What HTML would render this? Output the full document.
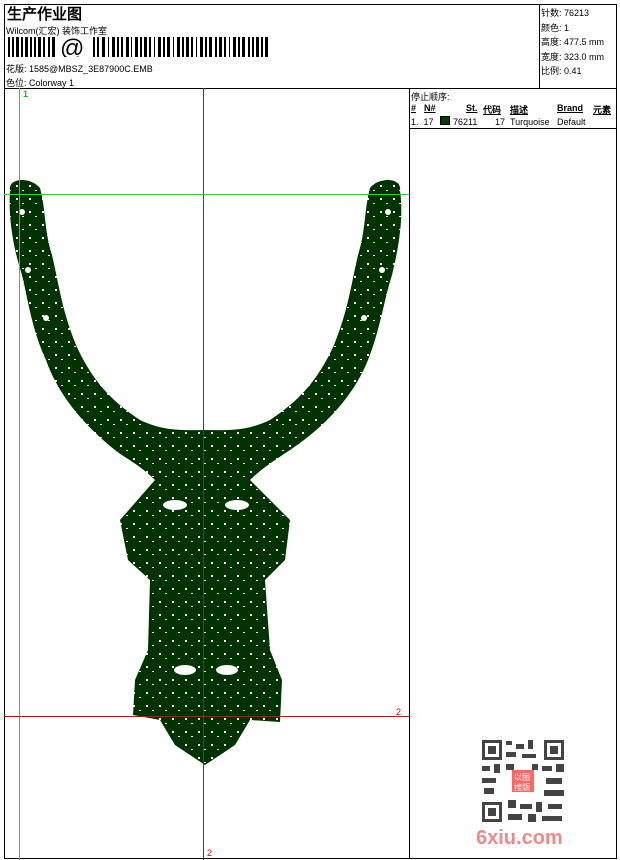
<!DOCTYPE html>
<html><head><meta charset="utf-8"><style>
*{margin:0;padding:0;box-sizing:border-box}
body{width:620px;height:860px;background:#fff;position:relative;overflow:hidden;font-family:"Liberation Sans","WenQuanYi Zen Hei",sans-serif;color:#000}
.a{position:absolute;white-space:nowrap}
.s{font-size:9px}
</style></head><body>
<div class="a" style="left:4px;top:4px;width:613px;height:855px;border:1px solid #000"></div>
<div class="a" style="left:4px;top:88px;width:613px;border-top:1px solid #000"></div>
<div class="a" style="left:539px;top:4px;height:85px;border-left:1px solid #000"></div>
<div class="a" style="left:409px;top:88px;height:771px;border-left:1px solid #000"></div>
<div class="a" style="left:409px;top:128px;width:208px;border-top:1px solid #000"></div>

<div class="a" style="left:7px;top:3px;font-size:15px;font-weight:bold;font-family:'WenQuanYi Zen Hei',sans-serif">生产作业图</div>
<div class="a s" style="left:6px;top:24px">Wilcom(汇宏) 装饰工作室</div>
<svg class="a" style="left:8px;top:37px" width="265" height="20">
<g fill="#000">
<rect x="0" y="0" width="2" height="20"/><rect x="4" y="0" width="2" height="20"/><rect x="8" y="0" width="3" height="20"/><rect x="13" y="0" width="2" height="20"/><rect x="17" y="0" width="3" height="20"/><rect x="22" y="0" width="2" height="20"/><rect x="26" y="0" width="2" height="20"/><rect x="30" y="0" width="3" height="20"/><rect x="35" y="0" width="2" height="20"/><rect x="40" y="0" width="2" height="20"/><rect x="44" y="0" width="3" height="20"/>
</g>
<text x="52" y="19" font-size="24" font-family="Liberation Sans">@</text>
<g fill="#000">
<rect x="85" y="0" width="2" height="20"/><rect x="89" y="0" width="2" height="20"/><rect x="94" y="0" width="3" height="20"/><rect x="100" y="0" width="1" height="20"/><rect x="104" y="0" width="3" height="20"/><rect x="109" y="0" width="2" height="20"/><rect x="113" y="0" width="2" height="20"/><rect x="118" y="0" width="3" height="20"/><rect x="123" y="0" width="1" height="20"/><rect x="127" y="0" width="3" height="20"/><rect x="132" y="0" width="2" height="20"/><rect x="136" y="0" width="3" height="20"/><rect x="141" y="0" width="2" height="20"/><rect x="146" y="0" width="1" height="20"/><rect x="150" y="0" width="3" height="20"/><rect x="155" y="0" width="2" height="20"/><rect x="159" y="0" width="3" height="20"/><rect x="165" y="0" width="1" height="20"/><rect x="169" y="0" width="3" height="20"/><rect x="174" y="0" width="2" height="20"/><rect x="178" y="0" width="3" height="20"/><rect x="183" y="0" width="2" height="20"/><rect x="188" y="0" width="1" height="20"/><rect x="192" y="0" width="3" height="20"/><rect x="197" y="0" width="2" height="20"/><rect x="201" y="0" width="3" height="20"/><rect x="207" y="0" width="2" height="20"/><rect x="211" y="0" width="3" height="20"/><rect x="216" y="0" width="2" height="20"/><rect x="221" y="0" width="1" height="20"/><rect x="225" y="0" width="3" height="20"/><rect x="230" y="0" width="2" height="20"/><rect x="234" y="0" width="3" height="20"/><rect x="240" y="0" width="2" height="20"/><rect x="244" y="0" width="2" height="20"/><rect x="248" y="0" width="3" height="20"/><rect x="253" y="0" width="2" height="20"/><rect x="257" y="0" width="3" height="20"/>
</g></svg>
<div class="a s" style="left:6px;top:62px">花版: 1585@MBSZ_3E87900C.EMB</div>
<div class="a s" style="left:6px;top:76px">色位: Colorway 1</div>

<div class="a s" style="left:541px;top:6px;line-height:14.5px">针数: 76213<br>颜色: 1<br>高度: 477.5 mm<br>宽度: 323.0 mm<br>比例: 0.41</div>

<div class="a s" style="left:411px;top:90px">停止顺序:</div>
<div class="a s" style="left:411px;top:103px;font-weight:bold;text-decoration:underline">#</div>
<div class="a s" style="left:424px;top:103px;font-weight:bold;text-decoration:underline">N#</div>
<div class="a s" style="left:466px;top:103px;font-weight:bold;text-decoration:underline">St.</div>
<div class="a s" style="left:483px;top:103px;font-weight:bold;text-decoration:underline">代码</div>
<div class="a s" style="left:510px;top:103px;font-weight:bold;text-decoration:underline">描述</div>
<div class="a s" style="left:557px;top:103px;font-weight:bold;text-decoration:underline">Brand</div>
<div class="a s" style="left:593px;top:103px;font-weight:bold;text-decoration:underline">元素</div>
<div class="a s" style="left:411px;top:117px">1.&nbsp; 17</div>
<div class="a" style="left:440px;top:116px;width:10px;height:9px;background:#0a3a0a;border:1px solid #000"></div>
<div class="a s" style="left:453px;top:117px">76211</div>
<div class="a s" style="left:495px;top:117px">17</div>
<div class="a s" style="left:510px;top:117px">Turquoise</div>
<div class="a s" style="left:557px;top:117px">Default</div>

<svg class="a" style="left:0;top:0" width="410" height="860">
<defs>
<pattern id="lace" width="13" height="13" patternUnits="userSpaceOnUse">
<rect width="13" height="13" fill="#003300"/>
<rect x="3" y="3" width="2" height="2" fill="#fff"/>
<rect x="9" y="8" width="2" height="1" fill="#fff"/>
</pattern>
</defs>
<g fill="url(#lace)" stroke="none">
<path d="M10,190 C8,178 30,176 40,188 C46,210 44,230 52,255 C60,290 62,310 76,345 C92,380 110,400 140,420 C165,432 185,430 205,430 C225,430 245,432 270,420 C300,400 318,380 334,345 C348,310 350,290 358,255 C366,230 364,210 370,188 C380,176 402,178 400,190 C404,220 398,250 392,275 C384,300 380,330 368,360 C352,400 320,430 290,450 C272,462 260,470 250,480 L290,520 L285,560 L265,580 L270,650 L282,680 L280,722 L250,720 L235,745 L205,765 L175,745 L160,720 L133,715 L135,680 L148,650 L150,580 L128,560 L120,520 L155,480 C140,465 128,460 115,450 C90,430 60,400 46,360 C32,330 28,300 22,275 C14,250 8,220 10,190 Z"/>
</g>
<g fill="#fff">
<ellipse cx="175" cy="505" rx="12" ry="5"/><ellipse cx="237" cy="505" rx="12" ry="5"/>
<ellipse cx="185" cy="670" rx="11" ry="5"/><ellipse cx="227" cy="670" rx="11" ry="5"/>
<circle cx="46" cy="318" r="3"/><circle cx="364" cy="318" r="3"/>
<circle cx="28" cy="270" r="3"/><circle cx="382" cy="270" r="3"/>
<circle cx="22" cy="212" r="3"/><circle cx="388" cy="212" r="3"/>
</g>
<line x1="19.5" y1="88" x2="19.5" y2="860" stroke="#00ee00" stroke-width="1"/>
<line x1="4" y1="194.5" x2="409" y2="194.5" stroke="#00ee00" stroke-width="1"/>
<line x1="203.5" y1="88" x2="203.5" y2="860" stroke="#e00000" stroke-width="1"/>
<line x1="4" y1="716.5" x2="409" y2="716.5" stroke="#e00000" stroke-width="1"/>
<text x="23" y="97" font-size="9" fill="#00cc00" font-weight="bold" font-family="Liberation Sans">1</text>
<text x="396" y="715" font-size="9" fill="#e00000" font-family="Liberation Sans">2</text>
<text x="207" y="856" font-size="9" fill="#e00000" font-family="Liberation Sans">2</text>
</svg>

<svg class="a" style="left:480px;top:738px" width="86" height="86">
<rect width="86" height="86" fill="#fff"/>
<g fill="#444">
<rect x="2" y="2" width="20" height="20"/><rect x="64" y="2" width="20" height="20"/><rect x="2" y="64" width="20" height="20"/>
</g>
<g fill="#fff"><rect x="5" y="5" width="14" height="14"/><rect x="67" y="5" width="14" height="14"/><rect x="5" y="67" width="14" height="14"/></g>
<g fill="#444"><rect x="8" y="8" width="8" height="8"/><rect x="70" y="8" width="8" height="8"/><rect x="8" y="70" width="8" height="8"/>
<rect x="26" y="3" width="6" height="4"/><rect x="36" y="6" width="8" height="5"/><rect x="48" y="2" width="5" height="9"/><rect x="26" y="14" width="10" height="5"/><rect x="42" y="16" width="14" height="4"/>
<rect x="2" y="28" width="8" height="5"/><rect x="14" y="26" width="6" height="9"/><rect x="62" y="28" width="10" height="5"/><rect x="76" y="26" width="8" height="8"/>
<rect x="2" y="40" width="14" height="5"/><rect x="66" y="40" width="16" height="6"/><rect x="4" y="50" width="10" height="6"/><rect x="64" y="52" width="20" height="6"/>
<rect x="28" y="62" width="8" height="8"/><rect x="40" y="66" width="12" height="5"/><rect x="56" y="64" width="6" height="10"/><rect x="68" y="66" width="14" height="5"/>
<rect x="28" y="76" width="14" height="6"/><rect x="48" y="76" width="8" height="8"/><rect x="62" y="78" width="20" height="5"/><rect x="26" y="26" width="8" height="6"/><rect x="52" y="26" width="6" height="6"/>
</g>
<rect x="32" y="32" width="22" height="22" fill="#f66"/>
<text x="34" y="42" font-size="8" fill="#fff" font-family="WenQuanYi Zen Hei">以图</text>
<text x="34" y="52" font-size="8" fill="#fff" font-family="WenQuanYi Zen Hei">搜版</text>
</svg>
<div class="a" style="left:476px;top:827px;font-size:20px;font-weight:bold;color:#f08a8a;font-family:'Liberation Sans',sans-serif">6xiu.com</div>
</body></html>
